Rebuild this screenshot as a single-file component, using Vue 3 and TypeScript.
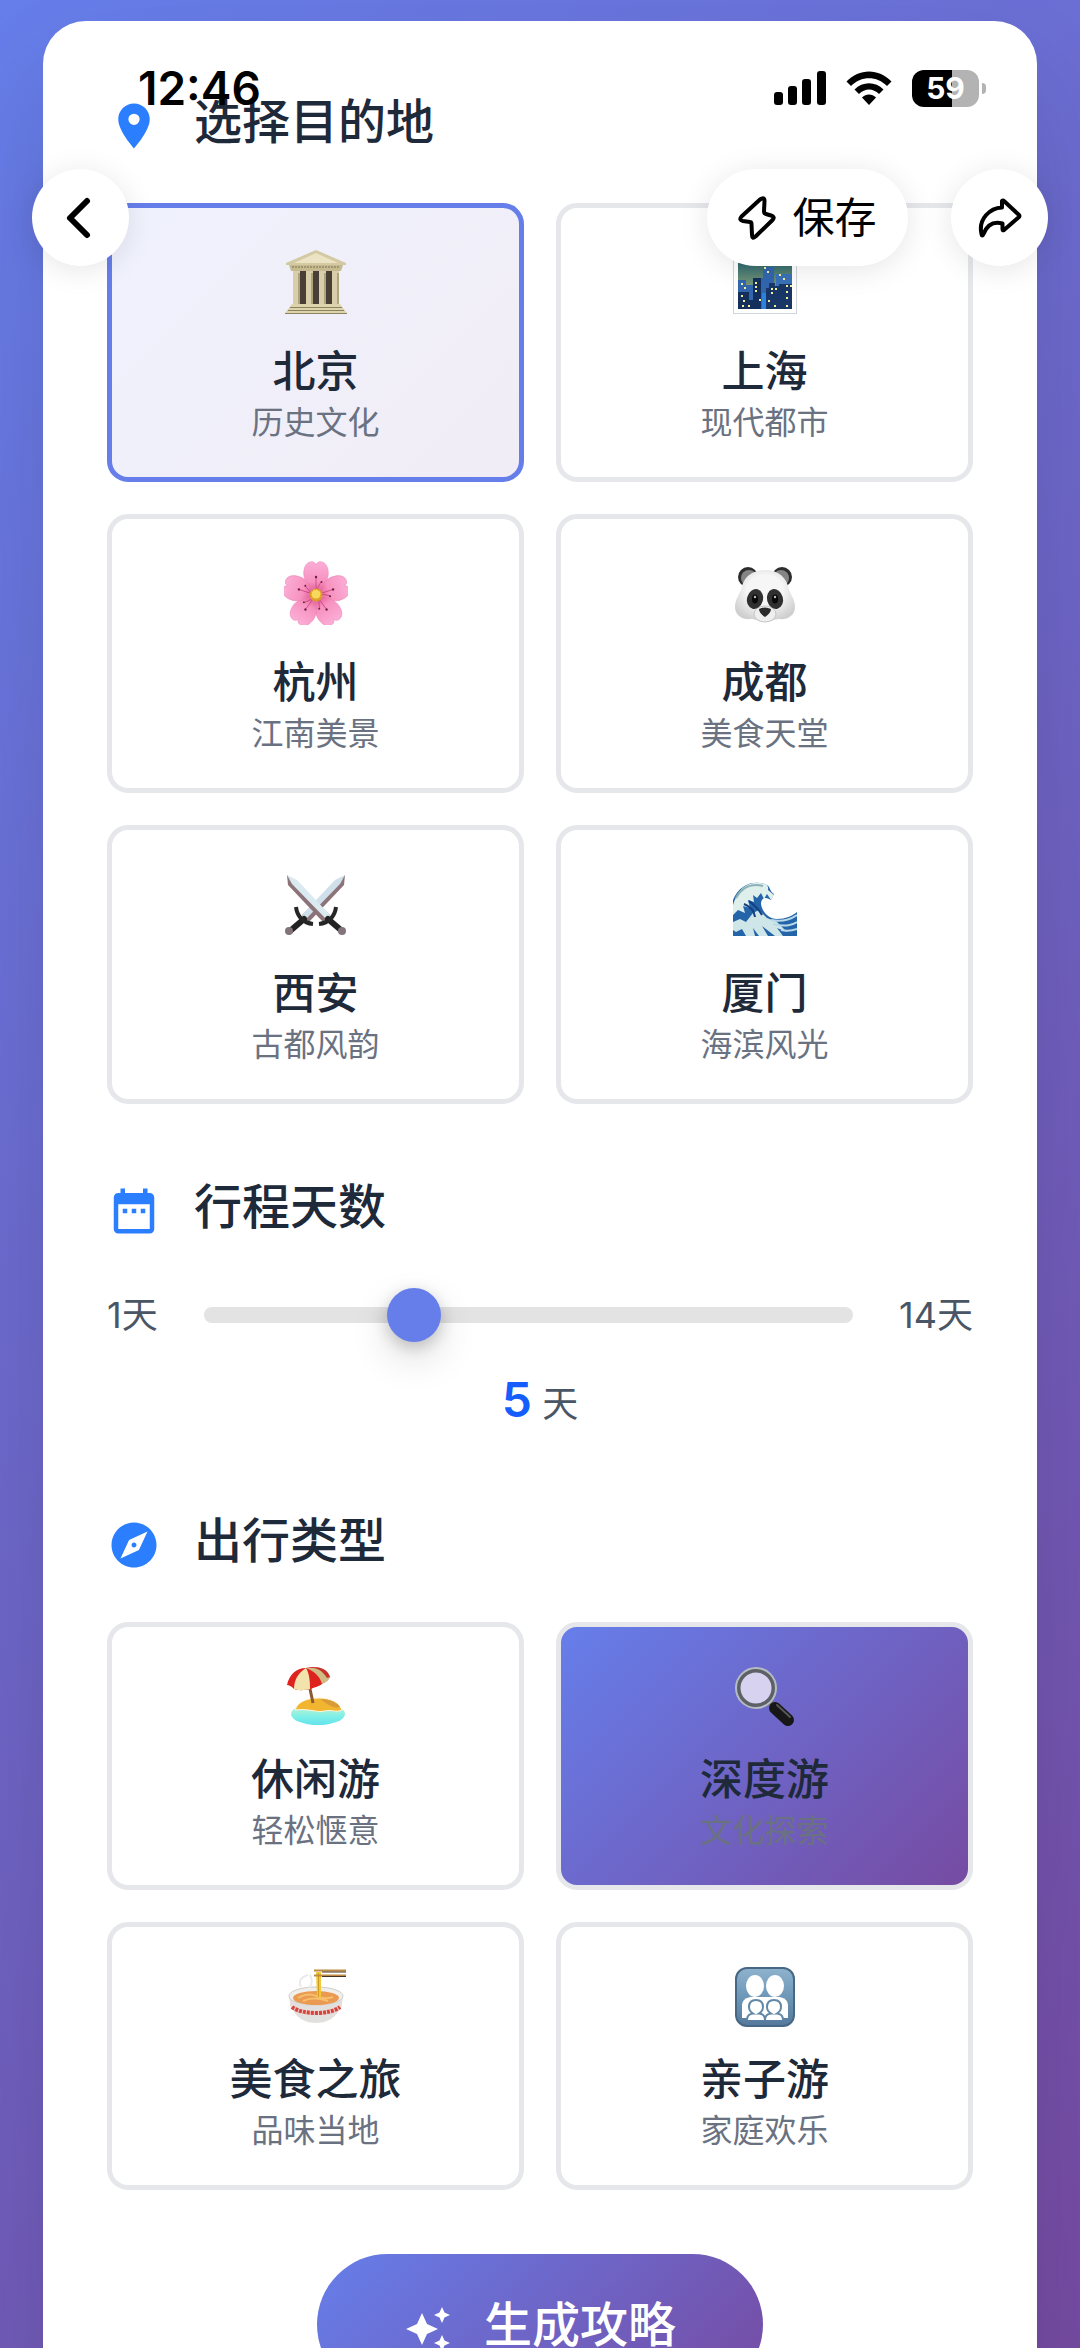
<script setup lang="ts">
import { ref } from 'vue'

interface Option {
  id: string
  name: string
  note: string
}

const destinations: Option[] = [
  { id: 'beijing', name: '北京', note: '历史文化' },
  { id: 'shanghai', name: '上海', note: '现代都市' },
  { id: 'hangzhou', name: '杭州', note: '江南美景' },
  { id: 'chengdu', name: '成都', note: '美食天堂' },
  { id: 'xian', name: '西安', note: '古都风韵' },
  { id: 'xiamen', name: '厦门', note: '海滨风光' },
]

const tripTypes: Option[] = [
  { id: 'leisure', name: '休闲游', note: '轻松惬意' },
  { id: 'depth', name: '深度游', note: '文化探索' },
  { id: 'food', name: '美食之旅', note: '品味当地' },
  { id: 'family', name: '亲子游', note: '家庭欢乐' },
]

const destination = ref('beijing')
const tripType = ref('depth')
const days = ref(5)

const petals = [0, 72, 144, 216, 288]
const windows: [number, number][] = [
  [8, 33], [11, 37], [22, 32], [22, 36], [22, 40], [31, 17], [34, 21], [46, 24], [50, 28],
  [38, 38], [38, 42], [42, 38], [53, 35], [53, 41], [53, 47], [57, 35], [8, 45], [10, 50],
  [9, 55], [15, 55], [26, 49], [35, 50], [41, 55], [53, 55],
]
</script>

<template>
  <div class="shell">
    <header class="status-bar">
      <time class="clock">12:46</time>
      <div class="indicators">
        <svg class="signal" viewBox="0 0 52 34" aria-hidden="true">
          <rect x="0" y="21" width="9" height="13" rx="3" />
          <rect x="14" y="15" width="9" height="19" rx="3" />
          <rect x="28" y="8" width="9" height="26" rx="3" />
          <rect x="43" y="0" width="9" height="34" rx="3" />
        </svg>
        <svg class="wifi" viewBox="0 0 46 34" aria-hidden="true">
          <path d="M0.5 10.5C13-3 33-3 45.5 10.5L41 15C31 4.5 15 4.5 5 15Z" />
          <path d="M8.5 18.5C16.5 10 29.5 10 37.5 18.5L33 23C27 17 19 17 13 23Z" />
          <path d="M16 26.5C20 22.5 26 22.5 30 26.5L23 34Z" />
        </svg>
        <div class="battery"><span>59</span></div>
      </div>
    </header>

    <nav class="toolbar">
      <button class="tool round" type="button" aria-label="返回">
        <svg width="28" height="44" viewBox="0 0 28 44" fill="none" stroke="#000" stroke-width="6" stroke-linecap="round" stroke-linejoin="round">
          <path d="M23 5L6 22L23 39" />
        </svg>
      </button>
      <button class="tool save" type="button">
        <svg width="38" height="44" viewBox="0 0 38 44" fill="none" stroke="#000" stroke-width="4" stroke-linejoin="round">
          <path d="M22 3.5Q26.5 0.5 26.5 5L26 15.5Q26 17.500 28 18L33 19.5Q37.500 21 34.5 24L17.500 40.500Q14 43.500 14 39L13.500 28Q13.500 26 12 26L5 25Q0.500 24 3.500 20.500Z" />
        </svg>
        <span>保存</span>
      </button>
      <button class="tool round share" type="button" aria-label="分享">
        <svg width="44" height="40" viewBox="0 0 44 40" fill="none" stroke="#000" stroke-width="4" stroke-linejoin="round">
          <path d="M24 3Q25 2 26 3L41 17Q42 18 41 19L26 32Q24.5 33 24.5 31V25.5Q11 22 5.5 36Q4 39 3.5 36C0 21 12 10 24 9.5Z" />
        </svg>
      </button>
    </nav>

    <div class="scroller">
      <main class="sheet">
        <section class="block">
          <h2 class="heading">
            <svg class="heading-icon" viewBox="0 0 24 24" aria-hidden="true">
              <path d="M12 2C8.13 2 5 5.13 5 9c0 5.25 7 13 7 13s7-7.75 7-13c0-3.87-3.13-7-7-7zm0 9.5a2.5 2.5 0 1 1 0-5 2.5 2.5 0 0 1 0 5z" />
            </svg>
            <span>选择目的地</span>
          </h2>
          <div class="grid">
            <button
              v-for="item in destinations"
              :key="item.id"
              type="button"
              class="card place"
              :class="{ picked: destination === item.id }"
              :aria-pressed="destination === item.id"
              @click="destination = item.id"
            >
              <span class="art">
                <svg v-if="item.id === 'beijing'" viewBox="0 0 64 64">
                  <rect x="11" y="21" width="43" height="34" fill="#4a3f37" />
                  <path d="M32 0L62 13V15H2V13Z" fill="#d3c9a2" />
                  <path d="M32 3L54 13H10Z" fill="#ebe3c4" />
                  <path d="M5 15H59L57 21H7Z" fill="#c5ba90" />
                  <path d="M8 17H56" stroke="#7c7350" stroke-dasharray="2 1" />
                  <g fill="#d8cfaa">
                    <rect x="9" y="21" width="7" height="34" /><rect x="22" y="21" width="7" height="34" />
                    <rect x="35" y="21" width="7" height="34" /><rect x="48" y="21" width="7" height="34" />
                  </g>
                  <g fill="#aea57d">
                    <rect x="14" y="23" width="2" height="31" /><rect x="27" y="23" width="2" height="31" />
                    <rect x="40" y="23" width="2" height="31" /><rect x="53" y="23" width="2" height="31" />
                  </g>
                  <path d="M8 54H56L63 63H1Z" fill="#ddd4ae" />
                  <path d="M6 57.5H58M4 60.5H60M1 63.5H63" stroke="#8c8460" stroke-width="1" />
                </svg>
                <svg v-else-if="item.id === 'shanghai'" viewBox="0 0 64 64">
                  <defs>
                    <linearGradient id="dusk" x1="0" y1="0" x2="0" y2="1">
                      <stop offset="0" stop-color="#16566c" /><stop offset="0.6" stop-color="#7e9d78" /><stop offset="1" stop-color="#4a80c0" />
                    </linearGradient>
                  </defs>
                  <rect x="0.5" y="0.5" width="63" height="63" fill="#fff" stroke="#cfd5d8" />
                  <rect x="5" y="5" width="54" height="54" fill="url(#dusk)" />
                  <path d="M5 30H13V35H20V28H30V17H41V59H5Z" fill="#3266ae" />
                  <path d="M43 24H59V59H38V37H43Z" fill="#3a71b8" />
                  <path d="M5 42H16V50H20V28H28V59H5Z" fill="#142f5c" />
                  <path d="M33 38H36V33H42V36H46V34H59V59H33Z" fill="#183766" />
                  <rect x="29" y="43" width="4" height="16" fill="#2d82df" />
                  <rect v-for="([x, y], i) in windows" :key="i" :x="x" :y="y" width="2" height="2" fill="#f3ef9c" />
                </svg>
                <svg v-else-if="item.id === 'hangzhou'" viewBox="0 0 64 64">
                  <defs>
                    <linearGradient id="petal" x1="0" y1="0" x2="0" y2="1">
                      <stop offset="0" stop-color="#fbaed7" /><stop offset="0.6" stop-color="#f791bf" /><stop offset="1" stop-color="#d94b86" />
                    </linearGradient>
                  </defs>
                  <g v-for="angle in petals" :key="angle" :transform="`rotate(${angle} 32 34)`">
                    <path d="M32 34C25 27 18 18 20 9C21 1 28-1 31 2L32 4L33 2C36-1 43 1 44 9C46 18 39 27 32 34Z" fill="url(#petal)" stroke="#e982b4" stroke-width="0.5" />
                    <path d="M32 30V17M32 30L37 21" stroke="#c23c75" stroke-width="0.7" />
                    <circle cx="32" cy="16" r="1.2" fill="#6b1f3d" /><circle cx="37.5" cy="21" r="1" fill="#6b1f3d" />
                  </g>
                  <circle cx="32" cy="34" r="6.5" fill="#e3a52c" />
                  <circle cx="32" cy="33" r="4.5" fill="#f9d95c" />
                  <circle cx="32" cy="34" r="5.5" fill="none" stroke="#c5801d" stroke-dasharray="1 2" />
                </svg>
                <svg v-else-if="item.id === 'chengdu'" viewBox="0 0 64 64">
                  <defs>
                    <radialGradient id="fur" cx="0.5" cy="0.4" r="0.6">
                      <stop offset="0.5" stop-color="#f6f6f6" /><stop offset="1" stop-color="#cfcfcf" />
                    </radialGradient>
                  </defs>
                  <circle cx="15" cy="16" r="10" fill="#2d2d2d" /><circle cx="49" cy="16" r="10" fill="#2d2d2d" />
                  <circle cx="16" cy="17" r="8" fill="#858585" /><circle cx="48" cy="17" r="8" fill="#858585" />
                  <path d="M32 9C46 9 54 17 56 29C59 35 62 40 62 46C62 55 54 59 46 58C41 58 38 61 32 61C26 61 23 58 18 58C10 59 2 55 2 46C2 40 5 35 8 29C10 17 18 9 32 9Z" fill="url(#fur)" />
                  <ellipse cx="32" cy="53" rx="11" ry="8" fill="#efefef" stroke="#c6c6c6" stroke-width="1" />
                  <ellipse cx="22" cy="38" rx="8" ry="10" transform="rotate(15 22 38)" fill="#303030" />
                  <ellipse cx="42" cy="38" rx="8" ry="10" transform="rotate(-15 42 38)" fill="#303030" />
                  <ellipse cx="22" cy="38" rx="3" ry="4.5" fill="#080808" /><ellipse cx="42" cy="38" rx="3" ry="4.5" fill="#080808" />
                  <circle cx="22" cy="36" r="1.2" fill="#bbb" /><circle cx="42" cy="36" r="1.2" fill="#bbb" />
                  <path d="M26 48Q32 45 38 48Q38 52 32 56Q26 52 26 48Z" fill="#2b2b2b" />
                </svg>
                <svg v-else-if="item.id === 'xian'" viewBox="0 0 64 64">
                  <path d="M61 3L60 13L25 50L18 43Z" fill="#8c7378" />
                  <path d="M61 3L51 8L18 43L22 47L56 12Z" fill="#cfe0ea" />
                  <path d="M20 47L6 59" stroke="#222" stroke-width="6" stroke-linecap="round" />
                  <path d="M12 35C13 44 19 51 29 52" fill="none" stroke="#262626" stroke-width="4" />
                  <path d="M3 3L4 13L39 50L46 43Z" fill="#8c7378" />
                  <path d="M3 3L13 8L46 43L42 47L8 12Z" fill="#dbe9f1" />
                  <path d="M44 47L58 59" stroke="#222" stroke-width="6" stroke-linecap="round" />
                  <path d="M52 35C51 44 45 51 35 52" fill="none" stroke="#262626" stroke-width="4" />
                  <circle cx="5" cy="59" r="4" fill="#82747a" /><circle cx="58" cy="59" r="4" fill="#82747a" />
                </svg>
                <svg v-else viewBox="0 0 64 64">
                  <path d="M0 64V28C6 14 18 8 32 12C38 14 36 19 41 22L38 28C32 24 28 26 28 32C29 40 36 47 44 47C53 47 59 44 64 40V64Z" fill="#2464a9" />
                  <path d="M0 33C4 19 13 9 27 11C32 11 36 13 35 18L41 23L38 28L34 22L31 27L28 21L24 26L20 23L21 30L15 28L17 36L10 34L12 41L5 38L0 43Z" fill="#dfefec" />
                  <path d="M3 26C9 15 19 11 30 14" fill="none" stroke="#8bb2b6" stroke-width="2" />
                  <path d="M0 50L7 47L13 50L20 41L26 38L34 46L44 50L54 60L44 56L50 64H42L29 54L35 64H26L20 56L22 64H13L9 57L3 60L0 58Z" fill="#cfe6e9" />
                  <path d="M38 48Q52 51 64 43M40 52Q54 56 64 50M48 58Q56 60 64 57" fill="none" stroke="#b7d9e8" stroke-width="2" />
                  <path d="M11 32Q21 36 22 45M16 29Q26 37 29 43" fill="none" stroke="#123f82" stroke-width="2" />
                </svg>
              </span>
              <span class="name">{{ item.name }}</span>
              <span class="note">{{ item.note }}</span>
            </button>
          </div>
        </section>

        <section class="block">
          <h2 class="heading">
            <svg class="heading-icon" viewBox="0 0 24 24" aria-hidden="true">
              <path d="M9 11H7v2h2v-2zm4 0h-2v2h2v-2zm4 0h-2v2h2v-2zm2-7h-1V2h-2v2H8V2H6v2H5c-1.11 0-1.99.9-1.99 2L3 20c0 1.1.89 2 2 2h14c1.1 0 2-.9 2-2V6c0-1.1-.9-2-2-2zm0 16H5V9h14v11z" />
            </svg>
            <span>行程天数</span>
          </h2>
          <div class="slider-row">
            <span>1天</span>
            <input v-model.number="days" class="slider" type="range" min="1" max="14" aria-label="行程天数" />
            <span>14天</span>
          </div>
          <p class="days"><strong>{{ days }}</strong> 天</p>
        </section>

        <section class="block">
          <h2 class="heading">
            <svg class="heading-icon" viewBox="0 0 24 24" aria-hidden="true">
              <path d="M12 10.9c-.61 0-1.1.49-1.1 1.1s.49 1.1 1.1 1.1c.61 0 1.1-.49 1.1-1.1s-.49-1.1-1.1-1.1zM12 2C6.48 2 2 6.48 2 12s4.48 10 10 10 10-4.48 10-10S17.52 2 12 2zm2.19 12.19L6 18l3.81-8.19L18 6l-3.81 8.19z" />
            </svg>
            <span>出行类型</span>
          </h2>
          <div class="grid">
            <button
              v-for="item in tripTypes"
              :key="item.id"
              type="button"
              class="card trip"
              :class="{ picked: tripType === item.id }"
              :aria-pressed="tripType === item.id"
              @click="tripType = item.id"
            >
              <span class="art">
                <svg v-if="item.id === 'leisure'" viewBox="0 0 64 64">
                  <defs>
                    <linearGradient id="sea" x1="0" y1="0" x2="0" y2="1">
                      <stop offset="0" stop-color="#d9f0c9" /><stop offset="0.6" stop-color="#7ff0e6" /><stop offset="1" stop-color="#63e3ee" />
                    </linearGradient>
                  </defs>
                  <ellipse cx="34" cy="49" rx="27" ry="11" fill="url(#sea)" />
                  <path d="M11 45C14 36 24 33 35 33C47 33 55 38 58 45C52 48 47 44 41 46C33 48 24 43 11 45Z" fill="#f2b52f" stroke="#fff6dc" stroke-width="1" />
                  <path d="M36 34C47 34 54 38 56 42C50 44 44 40 36 34Z" fill="#d99a38" />
                  <path d="M22 5L29 38" stroke="#8a5a35" stroke-width="3" />
                  <path d="M3 20C5 10 12 3 22 3C34 0 43 4 46 12C44 16 41 17 38 19C34 22 31 22 27 24C21 25 15 26 10 24C7 21 5 20 3 20Z" fill="#de231f" />
                  <path d="M22 3C14 8 10 15 10 24C16 26 22 25 26 24C26 15 25 8 22 3Z" fill="#f2e3ad" />
                  <path d="M22 3C32 7 36 12 38 19C42 17 44 16 46 12C43 5 35 1 28 3Z" fill="#cfbd85" />
                  <path d="M22 3C29 1 38 4 43 13L46 12C43 3 34 1 22 3Z" fill="#c8312a" />
                </svg>
                <svg v-else-if="item.id === 'depth'" viewBox="0 0 64 64">
                  <path d="M35 36L42 43" stroke="#777" stroke-width="6" />
                  <path d="M42 43L55 55" stroke="#171717" stroke-width="12" stroke-linecap="round" />
                  <path d="M44 40L57 52" stroke="#565656" stroke-width="2" stroke-linecap="round" />
                  <circle cx="23" cy="23" r="18" fill="#d6d2f0" stroke="#5d6065" stroke-width="5" />
                  <circle cx="23" cy="23" r="20" fill="none" stroke="#b5bdc4" stroke-width="2" />
                </svg>
                <svg v-else-if="item.id === 'food'" viewBox="0 0 64 64">
                  <path d="M5 31C6 47 16 58 32 58C48 58 58 47 59 31Z" fill="#e2e0de" />
                  <path d="M6 38C15 48 49 48 58 38L57 44C47 52 17 52 7 44Z" fill="#f2d4d0" />
                  <path d="M8 42C18 50 46 50 56 42" fill="none" stroke="#d4453f" stroke-width="4" stroke-dasharray="3 1" />
                  <ellipse cx="32" cy="31" rx="27" ry="9" fill="#f1efec" stroke="#d0cdca" stroke-width="1" />
                  <ellipse cx="32" cy="33" rx="23" ry="7" fill="#eb9a52" />
                  <path d="M14 33Q24 27 32 31T49 32M19 36Q29 31 44 36" fill="none" stroke="#f5bf6b" stroke-width="2" />
                  <path d="M17 22Q13 13 24 10M25 23Q30 17 26 10" fill="none" stroke="#eaeaea" stroke-width="2" />
                  <path d="M32 7H37V32H33Z" fill="#f1c939" />
                  <path d="M34.5 8V32" stroke="#d09c1e" stroke-width="1" />
                  <path d="M30 5.5H62M30 10.5H62" stroke="#bd8b44" stroke-width="2" /><path d="M38 7H62M38 11.5H62" stroke="#49331f" stroke-width="1" />
                </svg>
                <svg v-else viewBox="0 0 64 64">
                  <defs>
                    <linearGradient id="sign" x1="0" y1="0" x2="0" y2="1">
                      <stop offset="0" stop-color="#8fb3ce" /><stop offset="0.5" stop-color="#6d96b7" /><stop offset="1" stop-color="#55799b" />
                    </linearGradient>
                  </defs>
                  <rect x="3" y="3" width="58" height="58" rx="11" fill="url(#sign)" stroke="#476885" stroke-width="2" />
                  <g fill="#fff">
                    <ellipse cx="22" cy="21" rx="9" ry="11" /><ellipse cx="42" cy="21" rx="9" ry="11" />
                    <path d="M9 53V40Q9 34 17 32H47Q55 34 55 40V53Z" />
                  </g>
                  <g fill="#fff" stroke="#6288a8" stroke-width="2">
                    <path d="M14 55Q14 49 20 48.5Q16 46 16 42Q16 35 23 35Q30 35 30 42Q30 46 26 48.5Q32 49 32 55" />
                    <path d="M32 55Q32 49 38 48.5Q34 46 34 42Q34 35 41 35Q48 35 48 42Q48 46 44 48.5Q50 49 50 55" />
                  </g>
                </svg>
              </span>
              <span class="name">{{ item.name }}</span>
              <span class="note">{{ item.note }}</span>
            </button>
          </div>
        </section>

        <button class="generate" type="button">
          <svg class="sparkle" viewBox="0 0 24 24" aria-hidden="true">
            <path d="M19 9l1.25-2.75L23 5l-2.75-1.25L19 1l-1.25 2.75L15 5l2.75 1.25L19 9zm-7.5.5L9 4 6.5 9.5 1 12l5.5 2.5L9 20l2.5-5.500L17 12l-5.5-2.5zM19 15l-1.25 2.75L15 19l2.75 1.25L19 23l1.25-2.75L23 19l-2.75-1.25L19 15z" />
          </svg>
          <span>生成攻略</span>
        </button>
      </main>
    </div>
  </div>
</template>

<style>
body {
  margin: 0;
}
</style>

<style scoped>
.shell {
  position: relative;
  height: 100vh;
  overflow: hidden;
  background: linear-gradient(135deg, #667eea 0%, #764ba2 100%);
  font-family: Inter, 'Noto Sans CJK SC', sans-serif;
  color: #1e2939;
}

button {
  margin: 0;
  border: 0;
  font: inherit;
  color: inherit;
  cursor: pointer;
}

.scroller {
  height: 100%;
  overflow-y: auto;
  scrollbar-width: none;
}

.sheet {
  margin: 21px 43px;
  padding: 70px 64px 64px;
  border-radius: 43px;
  background: #fff;
  box-shadow: 0 54px 108px rgba(0, 0, 0, 0.12);
  display: flex;
  flex-direction: column;
}

/* Device status line, drawn over the scrolling page */
.status-bar {
  position: absolute;
  z-index: 2;
  top: 60px;
  left: 0;
  right: 0;
  padding: 0 101px 0 138px;
  display: flex;
  justify-content: space-between;
  align-items: center;
  color: #000;
}

.clock {
  font-size: 46px;
  line-height: 56px;
  font-weight: 600;
}

.indicators {
  display: flex;
  align-items: center;
  gap: 20px;
}

.signal {
  width: 52px;
  height: 34px;
}

.wifi {
  width: 46px;
  height: 34px;
}

.battery {
  position: relative;
  width: 67px;
  height: 37px;
  border-radius: 12px;
  background: linear-gradient(90deg, #000 60%, #b3b3b3 60%);
  color: #fff;
  font-size: 30px;
  line-height: 37px;
  font-weight: 700;
  text-align: center;
}

.battery::after {
  content: '';
  position: absolute;
  left: 70px;
  top: 13px;
  width: 4px;
  height: 11px;
  border-radius: 0 4px 4px 0;
  background: #b3b3b3;
}

.toolbar {
  position: absolute;
  z-index: 3;
  top: 169px;
  left: 0;
  right: 0;
  padding: 0 32px;
  display: flex;
}

.tool {
  height: 97px;
  padding: 0;
  border-radius: 49px;
  background: #fff;
  box-shadow: 0 4px 30px rgba(0, 0, 0, 0.1);
  color: #000;
  display: flex;
  align-items: center;
  justify-content: center;
}

.round {
  width: 97px;
}

.round:first-child svg {
  margin-right: 6px;
}

.save {
  width: 201px;
  margin-left: auto;
  gap: 16px;
  font-size: 42px;
  line-height: 60px;
}

.share {
  margin-left: 43px;
}

.block {
  margin-bottom: 72px;
}

.block:last-of-type {
  margin-bottom: 64px;
}

.heading {
  margin: 0 0 50px;
  display: flex;
  align-items: center;
  gap: 33px;
  font-size: 48px;
  line-height: 60px;
  font-weight: 500;
}

.heading-icon {
  width: 54px;
  height: 54px;
  margin-top: 8px;
  fill: #2b7fff;
}

.grid {
  display: grid;
  grid-template-columns: 1fr 1fr;
  gap: 32px;
}

.card {
  padding: 38px 32px 33px;
  border: 5px solid #e5e7eb;
  border-radius: 21px;
  background: #fff;
  display: flex;
  flex-direction: column;
  align-items: center;
}

.art {
  height: 64px;
  margin-bottom: 20px;
  display: flex;
  align-items: center;
}

.place .art {
  height: 71px;
  margin-bottom: 24px;
}

.art svg {
  width: 64px;
  height: 64px;
}

.name {
  font-size: 43px;
  line-height: 60px;
  font-weight: 500;
}

.note {
  font-size: 32px;
  line-height: 43px;
  color: #6a7282;
}

.place.picked {
  border-color: #667eea;
  background: linear-gradient(135deg, rgba(102, 126, 234, 0.1), rgba(118, 75, 162, 0.1)) #fff;
}

.trip.picked {
  background: linear-gradient(135deg, #667eea, #764ba2);
}

.slider-row {
  display: flex;
  align-items: center;
  gap: 46px;
  font-size: 36px;
  line-height: 54px;
  color: #4a5565;
}

.slider {
  flex: 1;
  min-width: 0;
  height: 16px;
  margin: 0;
  border-radius: 8px;
  background: #e3e3e3;
  appearance: none;
}

.slider::-webkit-slider-thumb {
  appearance: none;
  width: 54px;
  height: 54px;
  border-radius: 50%;
  background: #667eea;
  box-shadow: 0 16px 40px rgba(0, 0, 0, 0.14), 0 5px 16px rgba(0, 0, 0, 0.2);
}

.days {
  margin: 24px 0 0;
  font-size: 36px;
  line-height: 68px;
  text-align: center;
  color: #4a5565;
}

.days strong {
  font-size: 48px;
  font-weight: 600;
  color: #155dfc;
}

.generate {
  align-self: center;
  height: 141px;
  padding: 0 87px;
  border-radius: 71px;
  background: linear-gradient(135deg, #667eea, #764ba2);
  color: #fff;
  display: flex;
  align-items: center;
  gap: 32px;
  font-size: 48px;
  line-height: 60px;
  font-weight: 500;
}

.sparkle {
  width: 48px;
  height: 48px;
  margin-top: 8px;
  fill: #fff;
}
</style>
